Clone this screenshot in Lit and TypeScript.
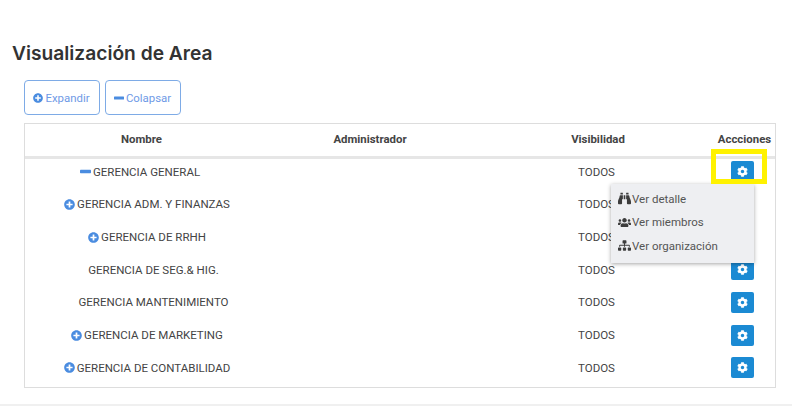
import { LitElement, html, css, svg } from "lit";
import { customElement } from "lit/decorators.js";

interface AreaRow {
  name: string;
  icon: "plus" | "minus" | "none";
}

const rows: AreaRow[] = [
  { name: "GERENCIA GENERAL", icon: "minus" },
  { name: "GERENCIA ADM. Y FINANZAS", icon: "plus" },
  { name: "GERENCIA DE RRHH", icon: "plus" },
  { name: "GERENCIA DE SEG.& HIG.", icon: "none" },
  { name: "GERENCIA MANTENIMIENTO", icon: "none" },
  { name: "GERENCIA DE MARKETING", icon: "plus" },
  { name: "GERENCIA DE CONTABILIDAD", icon: "plus" },
];

const plusIcon = svg`<path d="M256 8C119 8 8 119 8 256s111 248 248 248 248-111 248-248S393 8 256 8zm144 276c0 6.6-5.4 12-12 12h-92v92c0 6.6-5.4 12-12 12h-56c-6.6 0-12-5.4-12-12v-92h-92c-6.6 0-12-5.4-12-12v-56c0-6.6 5.4-12 12-12h92v-92c0-6.6 5.4-12 12-12h56c6.6 0 12 5.4 12 12v92h92c6.6 0 12 5.4 12 12v56z"/>`;
const minusIcon = svg`<rect x="0" y="180" width="512" height="152" rx="30"/>`;
const cogIcon = svg`<path d="M487.4 315.7l-42.6-24.6c4.3-23.2 4.3-47 0-70.2l42.6-24.6c4.9-2.8 7.1-8.6 5.5-14-11.1-35.6-30-67.8-54.7-94.6-3.8-4.1-10-5.1-14.8-2.3L380.8 110c-17.9-15.4-38.5-27.3-60.8-35.1V25.8c0-5.6-3.9-10.5-9.4-11.7-36.7-8.2-74.3-7.8-109.2 0-5.5 1.2-9.4 6.1-9.4 11.7V75c-22.2 7.9-42.8 19.8-60.8 35.1L88.7 85.5c-4.9-2.8-11-1.9-14.8 2.3-24.7 26.7-43.6 58.9-54.7 94.6-1.7 5.4.6 11.2 5.5 14L67.3 221c-4.3 23.2-4.3 47 0 70.2l-42.6 24.6c-4.9 2.8-7.1 8.6-5.5 14 11.1 35.6 30 67.8 54.7 94.6 3.8 4.1 10 5.1 14.8 2.3l42.6-24.6c17.9 15.4 38.5 27.3 60.8 35.1v49.2c0 5.6 3.9 10.5 9.4 11.7 36.7 8.2 74.3 7.8 109.2 0 5.5-1.2 9.4-6.1 9.4-11.7v-49.2c22.2-7.9 42.8-19.8 60.8-35.1l42.6 24.6c4.9 2.8 11 1.9 14.8-2.3 24.7-26.7 43.6-58.9 54.7-94.6 1.5-5.5-.7-11.3-5.6-14.1zM256 336c-44.1 0-80-35.9-80-80s35.9-80 80-80 80 35.9 80 80-35.9 80-80 80z"/>`;
const binocularsIcon = svg`<path d="M416 48c0-8.84-7.16-16-16-16h-64c-8.84 0-16 7.16-16 16v48h96V48zM63.91 159.99C61.4 253.84 3.46 274.22 0 404v44c0 17.67 14.33 32 32 32h96c17.67 0 32-14.33 32-32V288h32V128H95.84c-17.63 0-31.45 14.37-31.93 31.99zm384.18 0c-.48-17.62-14.3-31.99-31.93-31.99H320v160h32v160c0 17.67 14.33 32 32 32h96c17.67 0 32-14.33 32-32v-44c-3.46-129.78-61.4-150.16-63.91-244.01zM176 32h-64c-8.84 0-16 7.16-16 16v48h96V48c0-8.84-7.16-16-16-16zm48 256h64V128h-64v160z"/>`;
const usersIcon = svg`<path d="M96 224c35.3 0 64-28.7 64-64s-28.7-64-64-64-64 28.7-64 64 28.7 64 64 64zm448 0c35.3 0 64-28.7 64-64s-28.7-64-64-64-64 28.7-64 64 28.7 64 64 64zm32 32h-64c-17.6 0-33.5 7.1-45.1 18.6 40.3 22.1 68.9 62 75.1 109.4h66c17.7 0 32-14.3 32-32v-32c0-35.3-28.7-64-64-64zm-256 0c61.9 0 112-50.1 112-112S381.9 32 320 32 208 82.1 208 144s50.1 112 112 112zm76.8 32h-8.3c-20.8 10-43.9 16-68.5 16s-47.6-6-68.5-16h-8.3C179.6 288 128 339.6 128 403.2V432c0 26.5 21.5 48 48 48h288c26.5 0 48-21.5 48-48v-28.8c0-63.6-51.6-115.2-115.2-115.2zm-223.7-13.4C161.5 263.1 145.6 256 128 256H64c-35.3 0-64 28.7-64 64v32c0 17.7 14.3 32 32 32h65.9c6.3-47.4 34.9-87.3 75.2-109.4z"/>`;
const sitemapIcon = svg`<path d="M128 352H32c-17.67 0-32 14.33-32 32v96c0 17.67 14.33 32 32 32h96c17.67 0 32-14.33 32-32v-96c0-17.67-14.33-32-32-32zm-24-80h192v48h48v-48h192v48h48v-57.59c0-21.17-17.23-38.41-38.41-38.41H344v-64h40c17.67 0 32-14.33 32-32V32c0-17.67-14.33-32-32-32H256c-17.67 0-32 14.33-32 32v96c0 17.67 14.33 32 32 32h40v64H94.41C73.23 224 56 241.23 56 262.41V320h48v-48zm264 80h-96c-17.67 0-32 14.33-32 32v96c0 17.67 14.33 32 32 32h96c17.67 0 32-14.33 32-32v-96c0-17.67-14.33-32-32-32zm240 0h-96c-17.67 0-32 14.33-32 32v96c0 17.67 14.33 32 32 32h96c17.67 0 32-14.33 32-32v-96c0-17.67-14.33-32-32-32z"/>`;

@customElement("app-root")
export class AppRoot extends LitElement {
  static styles = css`
    :host {
      display: block;
      height: 419px;
      position: relative;
      overflow: hidden;
      background: #fff;
      font-family: Roboto, "Liberation Sans", sans-serif;
      font-size: 11.5px;
      color: #444;
    }
    svg {
      fill: currentColor;
      flex: none;
      display: block;
    }
    .page {
      padding: 41px 16px 0 12px;
    }
    h1 {
      margin: 0;
      font-family: Inter, sans-serif;
      font-size: 19.2px;
      font-weight: 600;
      line-height: 24px;
      color: #333;
    }
    .content {
      padding: 15px 0 0 12px;
    }
    .toolbar {
      display: flex;
      gap: 5px;
      margin-bottom: 8px;
    }
    .tool {
      display: flex;
      align-items: center;
      justify-content: center;
      gap: 2px;
      width: 76px;
      height: 35px;
      box-sizing: border-box;
      padding: 0 1px 0 0;
      border: 1px solid #7eabe6;
      border-radius: 4px;
      background: #fff;
      color: #6f9ae6;
      font: inherit;
      font-size: 11.4px;
    }
    .tool svg {
      color: #4a8ce0;
    }
    .grid {
      border: 1px solid #ddd;
      width: 752px;
      box-sizing: border-box;
      height: 265px;
    }
    .row {
      display: grid;
      grid-template-columns: 233px 224px 232px 61px;
      align-items: center;
      box-sizing: border-box;
      height: 32.67px;
      padding-bottom: 7px;
      text-align: center;
    }
    .head {
      height: 35px;
      padding-bottom: 3px;
      border-bottom: 3px solid #e6e6e6;
      font-size: 11.4px;
      font-weight: 700;
    }
    .head .actions {
      white-space: nowrap;
    }
    .name {
      display: flex;
      align-items: center;
      justify-content: center;
      gap: 2px;
    }
    .name svg {
      color: #4a8ce0;
    }
    .name.minus {
      padding-right: 3px;
    }
    .name.plus {
      padding-left: 11px;
    }
    .name.none {
      padding-left: 24px;
    }
    .visibility {
      padding-right: 3px;
    }
    .gear {
      display: flex;
      align-items: center;
      justify-content: center;
      width: 23px;
      height: 21px;
      margin: 0 21px 0 auto;
      padding: 0;
      border: 0;
      border-radius: 2px;
      background: #1b8ad3;
      color: #fff;
    }
    .menu {
      position: absolute;
      left: 611px;
      top: 184px;
      width: 143px;
      height: 79px;
      box-sizing: border-box;
      padding: 3px 7px;
      background: #eeeff2;
      box-shadow: 0 1px 4px rgba(0, 0, 0, 0.35);
      color: #555;
    }
    .menu-item {
      display: flex;
      align-items: center;
      gap: 1px;
      height: 23.5px;
    }
    .menu-item svg {
      color: #3c3c3c;
    }
    .mark {
      position: absolute;
      left: 711px;
      top: 149px;
      width: 56px;
      height: 35px;
      box-sizing: border-box;
      border: 5px solid #fff200;
      pointer-events: none;
    }
    .footer {
      position: absolute;
      left: 0;
      right: 0;
      top: 404px;
      border-top: 2px solid #f0f0f0;
    }
  `;

  private icon(shape: unknown, size: number, wide = false) {
    return html`<svg viewBox="0 0 ${wide ? 640 : 512} 512" width=${size} height=${size}>${shape}</svg>`;
  }

  private renderRow(row: AreaRow) {
    const shape = row.icon === "plus" ? plusIcon : minusIcon;
    return html`
      <div class="row">
        <div class="name ${row.icon}">
          ${row.icon === "none" ? "" : this.icon(shape, 11)}
          <span>${row.name}</span>
        </div>
        <div></div>
        <div class="visibility">TODOS</div>
        <div><button class="gear">${this.icon(cogIcon, 11)}</button></div>
      </div>
    `;
  }

  render() {
    return html`
      <div class="page">
        <h1>Visualización de Area</h1>
        <div class="content">
          <div class="toolbar">
            <button class="tool">${this.icon(plusIcon, 10)}Expandir</button>
            <button class="tool">${this.icon(minusIcon, 10)}Colapsar</button>
          </div>
          <div class="grid">
            <div class="row head">
              <div>Nombre</div>
              <div>Administrador</div>
              <div>Visibilidad</div>
              <div class="actions">Accciones</div>
            </div>
            ${rows.map((row) => this.renderRow(row))}
          </div>
        </div>
      </div>
      <div class="menu">
        <div class="menu-item">${this.icon(binocularsIcon, 13)}Ver detalle</div>
        <div class="menu-item">${this.icon(usersIcon, 13, true)}Ver miembros</div>
        <div class="menu-item">${this.icon(sitemapIcon, 13, true)}Ver organización</div>
      </div>
      <div class="mark"></div>
      <div class="footer"></div>
    `;
  }
}

declare global {
  interface HTMLElementTagNameMap {
    "app-root": AppRoot;
  }
}
